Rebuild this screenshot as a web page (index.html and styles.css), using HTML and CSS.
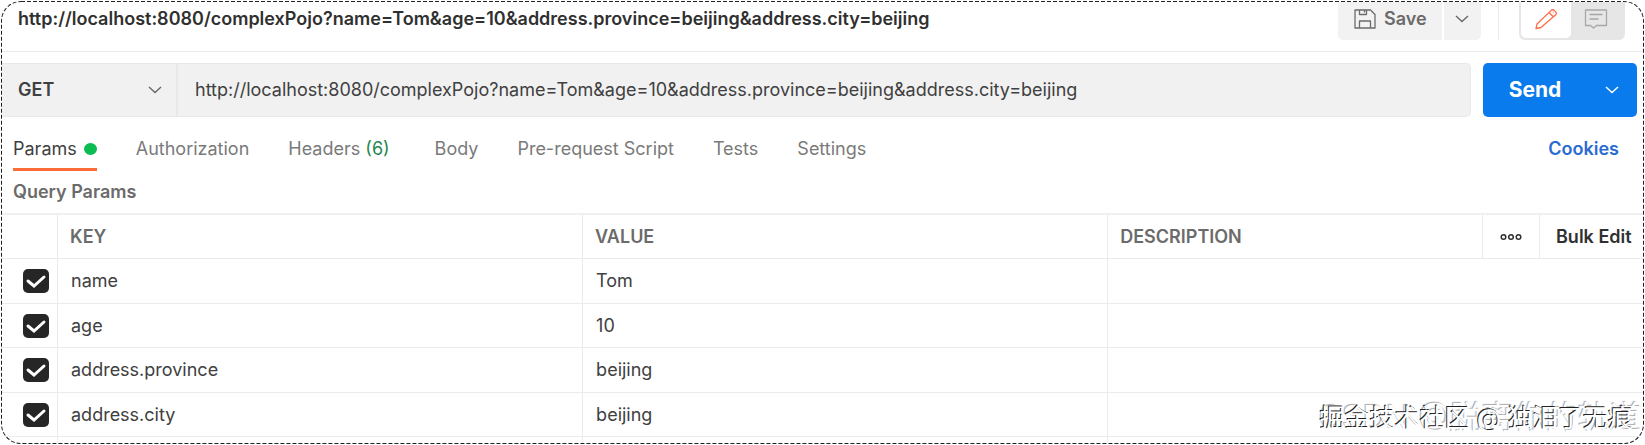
FILE: index.html
```html
<!DOCTYPE html>
<html lang="en">
<head>
<meta charset="utf-8">
<title>Request</title>
<link rel="stylesheet" href="styles.css">
</head>
<body>
<main class="frame">
  <header class="titlebar">
    <h1 class="title">http://localhost:8080/complexPojo?name=Tom&amp;age=10&amp;address.province=beijing&amp;address.city=beijing</h1>
    <div class="actions">
      <div class="save-group">
        <button class="save" type="button">
          <svg class="icon-save" viewBox="0 0 22 20" fill="none" stroke="currentColor" stroke-width="1.3" stroke-linejoin="round"><path d="M1 1h15.500l4.500 4.500V19H1zM5.500 1v4.500h7V1M10.500 1v2.500M5.500 19v-7h11v7"/></svg>
          <span>Save</span>
        </button>
        <button class="save-more" type="button" aria-label="Save options">
          <svg class="chevron" viewBox="0 0 14 8" fill="none" stroke="currentColor" stroke-width="1.500"><path d="M1 1l6 5.500L13 1"/></svg>
        </button>
      </div>
      <div class="view-switch">
        <button class="view view-on" type="button" aria-label="Edit">
          <svg class="icon-view" viewBox="0 0 24 22" fill="none" stroke="currentColor" stroke-width="1.300" stroke-linejoin="round"><path d="M2 20.500l1-4.500L17 2.600a2.600 2.600 0 0 1 3.500 0l1.200 1.200a2 2 0 0 1 0 3L7 19.500zM15 4.500l4.500 4.500M19 4.500l.5.500"/></svg>
        </button>
        <button class="view" type="button" aria-label="Comments">
          <svg class="icon-view" viewBox="0 0 24 22" fill="none" stroke="currentColor" stroke-width="1.300" stroke-linejoin="round"><path d="M1.500 2h21v15.500h-10L9.500 20l-3-2.500h-5zM5.500 6.500h13M5.500 11h9"/></svg>
        </button>
      </div>
    </div>
  </header>

  <form class="request">
    <div class="url-box">
      <label class="method">
        <select class="method-select" aria-label="Method"><option>GET</option><option>POST</option></select>
        <svg class="chevron" viewBox="0 0 14 8" fill="none" stroke="currentColor" stroke-width="1.500"><path d="M1 1l6 5.500L13 1"/></svg>
      </label>
      <input class="url" type="text" aria-label="Request URL" value="http://localhost:8080/complexPojo?name=Tom&amp;age=10&amp;address.province=beijing&amp;address.city=beijing">
    </div>
    <div class="send-group">
      <button class="send" type="button">Send</button>
      <button class="send-more" type="button" aria-label="Send options">
        <svg class="chevron" viewBox="0 0 14 8" fill="none" stroke="currentColor" stroke-width="1.500"><path d="M1 1l6 5.500L13 1"/></svg>
      </button>
    </div>
  </form>

  <nav class="tabs">
    <a class="tab tab-on" href="#params">Params <span class="dot"></span></a>
    <a class="tab" href="#auth">Authorization</a>
    <a class="tab tab-count" href="#headers">Headers <span class="count">(6)</span></a>
    <a class="tab" href="#body">Body</a>
    <a class="tab" href="#pre">Pre-request Script</a>
    <a class="tab" href="#tests">Tests</a>
    <a class="tab" href="#settings">Settings</a>
    <a class="cookies" href="#cookies">Cookies</a>
  </nav>

  <h2 class="section">Query Params</h2>

  <table class="params">
    <colgroup><col class="col-check"><col class="col-text"><col class="col-text"><col><col class="col-more"><col class="col-bulk"></colgroup>
    <thead>
      <tr>
        <th></th><th>KEY</th><th>VALUE</th><th>DESCRIPTION</th>
        <th class="cell-more"><button class="more" type="button" aria-label="More"><svg class="icon-more" viewBox="0 0 22 8" fill="none" stroke="currentColor" stroke-width="1.500"><circle cx="3.500" cy="4" r="2.300"/><circle cx="11" cy="4" r="2.300"/><circle cx="18.500" cy="4" r="2.300"/></svg></button></th>
        <th class="cell-bulk"><button class="bulk" type="button">Bulk Edit</button></th>
      </tr>
    </thead>
    <tbody>
      <tr><td class="cell-check"><input class="check" type="checkbox" aria-label="name" checked></td><td>name</td><td>Tom</td><td colspan="3"></td></tr>
      <tr><td class="cell-check"><input class="check" type="checkbox" aria-label="age" checked></td><td>age</td><td>10</td><td colspan="3"></td></tr>
      <tr><td class="cell-check"><input class="check" type="checkbox" aria-label="address.province" checked></td><td>address.province</td><td>beijing</td><td colspan="3"></td></tr>
      <tr><td class="cell-check"><input class="check" type="checkbox" aria-label="address.city" checked></td><td>address.city</td><td>beijing</td><td colspan="3"></td></tr>
    </tbody>
    <tfoot><tr><td></td><td></td><td></td><td colspan="3"></td></tr></tfoot>
  </table>
  <div class="mark mark-back">CSDN @脱离你的轨道</div>
  <div class="mark mark-front">掘金技术社区 @ 独泪了无痕</div>
  <svg class="outline" aria-hidden="true"><rect width="100%" height="100%" rx="20" fill="none" stroke="#222" stroke-width="2" stroke-dasharray="4 2"/></svg>
</main>
</body>
</html>
```

FILE: styles.css
```css
* { box-sizing: border-box; }

body {
  margin: 0;
  padding: 1px;
  background: #fff;
  color: #303030;
  font-family: Inter, "Noto Sans CJK SC", sans-serif;
  font-size: 18px;
  font-optical-sizing: none;
  line-height: 24px;
}

button, input, select {
  margin: 0;
  padding: 0;
  border: 0;
  background: none;
  color: inherit;
  font: inherit;
  font-optical-sizing: none;
}

a { color: inherit; text-decoration: none; }
svg { display: block; flex: none; }

.frame {
  position: relative;
  overflow: hidden;
  padding: 1px;
  border-radius: 20px;
}
.outline {
  position: absolute;
  inset: 0;
  width: 100%;
  height: 100%;
  pointer-events: none;
}

/* Title bar */
.titlebar {
  display: flex;
  justify-content: space-between;
  align-items: flex-start;
  height: 50px;
  padding: 0 18px 0 16px;
  border-bottom: 1px solid #ebebeb;
}
.title {
  margin: 0;
  padding-top: 5px;
  font-size: 18px;
  font-weight: 600;
  line-height: 24px;
  white-space: nowrap;
}
.actions { display: flex; height: 38px; }
.save-group {
  display: flex;
  gap: 2px;
  margin-right: 18px;
  color: #6b6b6b;
}
.save {
  display: flex;
  align-items: center;
  gap: 8px;
  width: 104px;
  padding: 0 0 4px 16px;
  border-radius: 0 0 0 5px;
  background: #f2f2f2;
  font-weight: 600;
}
.save-more {
  display: grid;
  place-items: center;
  width: 37px;
  padding: 0 2px 4px 0;
  border-radius: 0 0 5px 0;
  background: #f2f2f2;
}
.icon-save { width: 22px; height: 20px; }
.chevron { width: 14px; height: 8px; }
.view-switch {
  display: flex;
  position: relative;
  margin-left: 20px;
  padding: 0 4px 2px 2px;
  border-radius: 0 0 6px 6px;
  background: #e6e6e6;
}
.view-switch::before {
  content: "";
  position: absolute;
  top: 0;
  left: -21px;
  width: 1px;
  height: 38px;
  background: #ebebeb;
}
.view {
  display: grid;
  place-items: center;
  width: 50px;
  padding-bottom: 2px;
  color: #a8a8a8;
}
.view-on {
  border-radius: 0 0 5px 5px;
  background: #fff;
  color: #ff6c47;
}
.icon-view { width: 24px; height: 22px; }

/* Request line */
.request {
  display: flex;
  gap: 12px;
  height: 54px;
  margin: 11px 6px 0 0;
}
.url-box {
  display: flex;
  flex: 1;
  border: 1px solid #e8e8e8;
  border-left: 0;
  border-radius: 0 5px 5px 0;
  background: #f1f1f1;
}
.method {
  display: flex;
  align-items: center;
  width: 176px;
  padding: 0 14px 0 16px;
  border-right: 2px solid #e8e8e8;
  color: #6b6b6b;
}
.method-select {
  flex: 1;
  appearance: none;
  color: #404040;
  font-weight: 600;
}
.url {
  flex: 1;
  min-width: 0;
  padding: 0 17px;
  color: #404040;
}
.send-group {
  display: flex;
  width: 154px;
  border-radius: 5px;
  background: #097bed;
  color: #fff;
}
.send {
  flex: 1;
  font-size: 21px;
  font-weight: 700;
}
.send-more {
  display: grid;
  place-items: center;
  width: 50px;
}

/* Tabs */
.tabs {
  display: flex;
  gap: 39px;
  height: 54px;
  padding: 0 24px 0 11px;
  color: #7a7a7a;
}
.tab {
  height: 54px;
  padding-top: 20px;
  white-space: nowrap;
}
.tab-on {
  display: flex;
  align-items: flex-start;
  gap: 7px;
  border-bottom: 3px solid #ff6c37;
  color: #404040;
}
.tab-count { padding-right: 6px; }
.dot {
  width: 13px;
  height: 12px;
  margin-top: 6px;
  border-radius: 50%;
  background: #0cbb52;
}
.count { color: #1f8750; }
.cookies {
  margin-left: auto;
  padding-top: 20px;
  color: #2a6bd1;
  font-weight: 600;
}

.section {
  margin: 0;
  padding: 9px 11px;
  color: #6b6b6b;
  font-size: 18px;
  font-weight: 600;
  line-height: 24px;
}

/* Parameter table */
.params {
  width: 100%;
  border-spacing: 0;
  border-top: 2px solid #f0f0f0;
  table-layout: fixed;
}
.col-check { width: 56px; }
.col-text { width: 32%; }
.col-more { width: 57px; }
.col-bulk { width: 103px; }
.params th, .params td {
  padding: 0 13px;
  border-right: 1px solid #ebebeb;
  border-bottom: 1px solid #ebebeb;
  text-align: left;
  white-space: nowrap;
}
.params th:last-child, .params td:last-child { border-right: 0; }
.params th { height: 44px; padding: 0 12px; color: #6b6b6b; font-weight: 600; }
.params td { height: 45px; color: #404040; }
.params tbody tr:nth-child(even) td { height: 44px; }
.params tfoot td { height: 6px; border-bottom: 0; }
.params .cell-more { padding: 0 17px; color: #303030; }
.params .cell-bulk { padding: 0 0 0 16px; color: #303030; }
.params .cell-check { padding: 0 0 0 21px; }
.more { display: block; }
.icon-more { width: 22px; height: 8px; }
.bulk { font-weight: 600; }
.check {
  display: block;
  appearance: none;
  width: 26px;
  height: 24px;
  border-radius: 5px;
  background: #262626 url('data:image/svg+xml,<svg xmlns="http://www.w3.org/2000/svg" viewBox="0 0 26 24"><path d="M5 12l6 5L21 8" fill="none" stroke="white" stroke-width="3" stroke-linecap="round"/></svg>') center / 100% no-repeat;
}

/* Watermarks */
.mark {
  position: absolute;
  color: #fff;
  white-space: nowrap;
  pointer-events: none;
}
.mark-back {
  right: 2px;
  bottom: 8px;
  font-size: 32px;
  line-height: 36px;
  text-shadow: -1px -1px 1px #aaa;
}
.mark-front {
  right: 11px;
  bottom: 8px;
  font-size: 25px;
  line-height: 36px;
  text-shadow: -1px -1px 0 #222;
}
```
